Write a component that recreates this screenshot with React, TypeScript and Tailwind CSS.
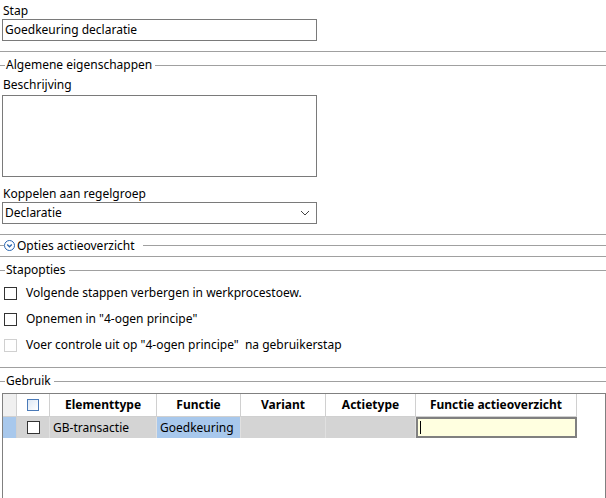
function Check({ disabled }: { disabled?: boolean }) {
  return <span className={`w-[13px] h-[13px] border bg-white shrink-0 ${disabled ? "border-[#d0d0d0]" : "border-[#333]"}`} />;
}

function GroupHeader({ children }: { children: React.ReactNode }) {
  return (
    <div className="flex items-center h-[14px] mt-[6px]">
      <span className="w-[5px] h-px bg-[#a0a0a0]" />
      <span className="px-[1px]">{children}</span>
      <span className="flex-1 h-px bg-[#a0a0a0] ml-[2px]" />
    </div>
  );
}

export default function App() {
  const cols = [
    { w: "w-[107px]", t: "Elementtype" },
    { w: "w-[84px]", t: "Functie" },
    { w: "w-[85px]", t: "Variant" },
    { w: "w-[90px]", t: "Actietype" },
    { w: "w-[161px]", t: "Functie actieoverzicht" },
  ];
  return (
    <div className="w-[606px] h-[498px] bg-white text-[12px] text-black overflow-hidden" style={{ fontFamily: '"Noto Sans", sans-serif' }}>
      <div className="pt-[3px] px-[3px] leading-[16px]">Stap</div>
      <div className="mx-[2px] w-[315px] h-[22px] border border-[#7a7a7a] px-[2px] flex items-center">Goedkeuring declaratie</div>
      <div className="h-px bg-[#a0a0a0] mt-[10px]" />
      <div className="leading-[16px]">
        <GroupHeader>Algemene eigenschappen</GroupHeader>
      </div>
      <div className="px-[3px] mt-[5px] leading-[16px]">Beschrijving</div>
      <div className="mx-[2px] mt-[2px] w-[315px] h-[82px] border border-[#7a7a7a]" />
      <div className="px-[3px] mt-[9px] leading-[16px]">Koppelen aan regelgroep</div>
      <div className="mx-[2px] w-[315px] h-[22px] border border-[#7a7a7a] px-[2px] flex items-center justify-between">
        <span>Declaratie</span>
        <svg width="10" height="6" viewBox="0 0 10 6" className="mr-[4px]"><path d="M1 1l4 4 4-4" fill="none" stroke="#444" /></svg>
      </div>
      <div className="h-px bg-[#a0a0a0] mt-[10px]" />
      <div className="flex items-center h-[21px]">
        <span className="w-[4px] h-px bg-[#a0a0a0]" />
        <svg width="11" height="11" viewBox="0 0 11 11"><circle cx="5.5" cy="5.5" r="5" fill="#fff" stroke="#2a66b0" /><path d="M3.2 4.5l2.3 2.3 2.3-2.3" fill="none" stroke="#2a66b0" strokeWidth="1.3" /></svg>
        <span className="ml-[2px]">Opties actieoverzicht</span>
        <span className="flex-1 h-px bg-[#a0a0a0] ml-[8px]" />
      </div>
      <div className="h-px bg-[#a0a0a0]" />
      <GroupHeader>Stapopties</GroupHeader>
      <div className="flex flex-col gap-[10px] mt-[8px] pl-[4px]">
        <div className="flex items-center gap-[9px] h-[16px]"><Check /><span>Volgende stappen verbergen in werkprocestoew.</span></div>
        <div className="flex items-center gap-[9px] h-[16px]"><Check /><span>Opnemen in "4-ogen principe"</span></div>
        <div className="flex items-center gap-[9px] h-[16px]"><Check disabled /><span>Voer controle uit op "4-ogen principe"&nbsp; na gebruikerstap</span></div>
      </div>
      <div className="h-px bg-[#a0a0a0] mt-[14px]" />
      <GroupHeader>Gebruik</GroupHeader>
      <div className="ml-[2px] mt-[5px] h-[110px] border border-[#808080]">
        <div className="flex h-[23px]">
          <div className="w-[14px] bg-[#f0f0f0] border-r border-b border-[#d0d0d0]" />
          <div className="w-[33px] flex items-center justify-center border-r border-b border-[#d0d0d0]">
            <span className="w-[12px] h-[12px] border border-[#4a7ab8] bg-gradient-to-br from-[#dde8f5] to-white" />
          </div>
          {cols.map((c) => (
            <div key={c.t} className={`${c.w} flex items-center justify-center font-bold border-r border-b border-[#d0d0d0]`}>{c.t}</div>
          ))}
        </div>
        <div className="flex h-[21px]">
          <div className="w-[14px] bg-[#a8c8ec] border-r border-[#d0d0d0]" />
          <div className="w-[33px] flex items-center justify-center bg-[#d4d4d4] border-r border-[#e0e0e0]">
            <span className="w-[13px] h-[13px] border border-[#333] bg-white" />
          </div>
          <div className="w-[107px] bg-[#d4d4d4] px-[3px] flex items-center border-r border-[#e0e0e0]">GB-transactie</div>
          <div className="w-[84px] bg-[#a8c8ec] px-[3px] flex items-center border-r border-[#e0e0e0]">Goedkeuring</div>
          <div className="w-[85px] bg-[#d4d4d4] border-r border-[#e0e0e0]" />
          <div className="w-[90px] bg-[#d4d4d4] border-r border-[#e0e0e0]" />
          <div className="w-[161px] bg-[#ffffe0] border-2 border-[#808080] flex items-center px-[2px]">
            <span className="w-px h-[13px] bg-black" />
          </div>
        </div>
      </div>
    </div>
  );
}
